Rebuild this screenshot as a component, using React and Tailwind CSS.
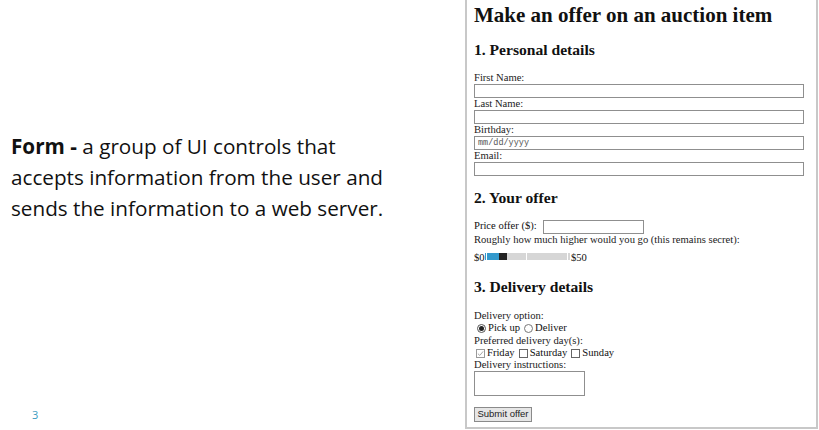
import React from "react";

const serif = { fontFamily: '"Liberation Serif", "Times New Roman", serif' };

function Label({ children, h = 12 }) {
  return (
    <div className="flex items-center text-[10.6px] leading-none text-[#1a1a1a] whitespace-nowrap" style={{ ...serif, height: h }}>
      {children}
    </div>
  );
}

function TextBox({ w = 330, h = 14, children }) {
  return (
    <div
      className="border border-[#8f8f8f] bg-white flex items-center pl-[3px] text-[8.5px] text-[#555]"
      style={{ width: w, height: h, fontFamily: '"Liberation Mono", monospace' }}
    >
      {children}
    </div>
  );
}

export default function App() {
  return (
    <div className="w-[819px] h-[430px] bg-white flex overflow-hidden">
      <div className="w-[465px] relative shrink-0">
        <div
          className="pt-[131px] pl-[11px] text-[20.7px] leading-[31px] text-[#111]"
          style={{ fontFamily: '"Open Sans", sans-serif' }}
        >
          <div><span className="font-bold">Form -</span> a group of UI controls that</div>
          <div>accepts information from the user and</div>
          <div>sends the information to a web server.</div>
        </div>
        <div
          className="absolute left-[32px] top-[407px] text-[11px] text-[#3a9bc0]"
          style={{ fontFamily: '"Open Sans", sans-serif' }}
        >
          3
        </div>
      </div>
      <div className="w-[353px] h-[429px] border-l-2 border-r-2 border-b-2 border-[#c8c8c8] pl-[7px] text-[#111]" style={serif}>
        <div className="h-[32px] flex items-center text-[21px] font-bold whitespace-nowrap">Make an offer on an auction item</div>
        <div className="mt-[8px] h-[20px] flex items-center text-[15.6px] font-bold">1. Personal details</div>
        <div className="mt-[12px]">
          <Label>First Name:</Label>
          <TextBox />
          <Label>Last Name:</Label>
          <TextBox />
          <Label>Birthday:</Label>
          <TextBox>mm/dd/yyyy</TextBox>
          <Label>Email:</Label>
          <TextBox />
        </div>
        <div className="mt-[12px] h-[20px] flex items-center text-[15.6px] font-bold">2. Your offer</div>
        <div className="mt-[11px] h-[15px] flex items-center">
          <span className="w-[69px] text-[10.6px] leading-none whitespace-nowrap">Price offer ($):</span>
          <TextBox w={101} h={14} />
        </div>
        <Label>Roughly how much higher would you go (this remains secret):</Label>
        <div className="mt-[3px] h-[16px] flex items-center text-[10.6px] leading-none">
          <span className="mt-[3px] w-[11px]">$0</span>
          <div className="w-[85px] h-[7px] flex items-stretch -mt-[2px]">
            <div className="w-[1px] bg-[#3399cc]" />
            <div className="w-[1px] bg-white" />
            <div className="w-[12px] bg-[#3399cc]" />
            <div className="w-[8px] bg-[#222]" />
            <div className="w-[19px] bg-[#d6d6d6]" />
            <div className="w-[1px] bg-white" />
            <div className="w-[40px] bg-[#d6d6d6]" />
            <div className="w-[1px] bg-white" />
            <div className="w-[2px] bg-[#d6d6d6]" />
          </div>
          <span className="mt-[3px] ml-[1px]">$50</span>
        </div>
        <div className="mt-[12px] h-[20px] flex items-center text-[15.6px] font-bold">3. Delivery details</div>
        <div className="mt-[13px]">
          <Label>Delivery option:</Label>
          <div className="h-[13px] flex items-center text-[10.6px] leading-none pl-[3px]">
            <span className="w-[9px] h-[9px] rounded-full border border-[#555] flex items-center justify-center mr-[2px]">
              <span className="w-[5px] h-[5px] rounded-full bg-[#222]" />
            </span>
            <span>Pick up</span>
            <span className="w-[9px] h-[9px] rounded-full border border-[#777] ml-[4px] mr-[2px]" />
            <span>Deliver</span>
          </div>
          <Label>Preferred delivery day(s):</Label>
          <div className="h-[13px] flex items-center text-[10.6px] leading-none pl-[2px]">
            <span className="w-[9px] h-[9px] border border-[#9a9a9a] flex items-center justify-center mr-[2px]">
              <svg width="7" height="7" viewBox="0 0 8 8">
                <path d="M1 4.2 L3.2 6.2 L7 1.6" fill="none" stroke="#999" strokeWidth="1" />
              </svg>
            </span>
            <span>Friday</span>
            <span className="w-[9px] h-[9px] border border-[#666] ml-[4px] mr-[2px]" />
            <span>Saturday</span>
            <span className="w-[9px] h-[9px] border border-[#666] ml-[4px] mr-[2px]" />
            <span>Sunday</span>
          </div>
          <Label h={11}>Delivery instructions:</Label>
          <div className="w-[111px] h-[25px] border border-[#8f8f8f]" />
          <div
            className="mt-[11px] w-[58px] h-[15px] border border-[#8a8a8a] bg-[#e6e6e6] flex items-center justify-center text-[9.5px] text-[#222]"
            style={{ fontFamily: '"Liberation Sans", Arial, sans-serif' }}
          >
            Submit offer
          </div>
        </div>
      </div>
    </div>
  );
}
